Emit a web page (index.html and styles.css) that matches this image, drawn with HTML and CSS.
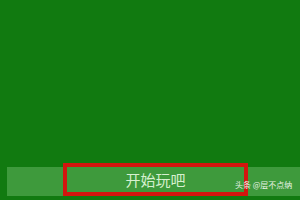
FILE: index.html
```html
<!DOCTYPE html>
<html>
<head>
<meta charset="utf-8">
<link rel="stylesheet" href="styles.css">
</head>
<body>
<div class="screen">
  <div class="spacer"></div>
  <div class="band">
    <div class="btn">开始玩吧</div>
    <span class="mark">头条 @层不点纳</span>
  </div>
  <div class="foot"></div>
</div>
</body>
</html>
```

FILE: styles.css
```css
html, body {
  margin: 0;
  padding: 0;
}
body {
  width: 300px;
  height: 200px;
  background: #117a10;
  font-family: "Noto Sans CJK SC", "Noto Sans", sans-serif;
  overflow: hidden;
}
.screen {
  width: 300px;
  height: 200px;
  display: flex;
  flex-direction: column;
}
.spacer {
  flex: 1;
}
.band {
  position: relative;
  height: 29px;
  margin-left: 7px;
  background: #3e9a3c;
}
.btn {
  position: absolute;
  left: 56px;
  top: -4px;
  width: 177px;
  height: 25px;
  border: 4px solid #d3150e;
  display: flex;
  align-items: center;
  justify-content: center;
  color: #d6f0cf;
  font-size: 15px;
}
.mark {
  position: absolute;
  left: 228px;
  top: 12px;
  font-size: 8px;
  color: #e8f3e4;
  white-space: nowrap;
}
.foot {
  height: 4px;
}
```
